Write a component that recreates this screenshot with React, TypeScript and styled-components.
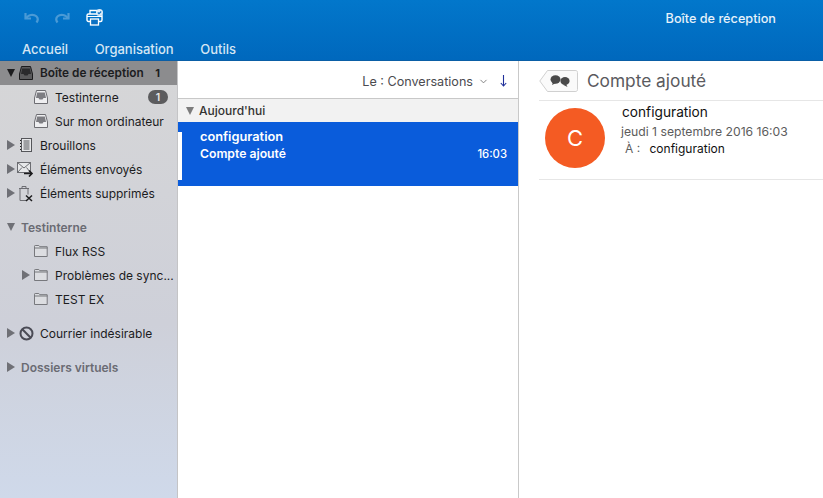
import React from "react";
import styled, { createGlobalStyle } from "styled-components";
import { ChevronDown } from "lucide-react";

const GlobalStyle = createGlobalStyle`
  html, body {
    margin: 0;
    padding: 0;
    height: 100%;
    overflow: hidden;
    background: #fff;
    font-family: "Inter", "Liberation Sans", sans-serif;
  }
  #root { height: 100%; }
`;

const Window = styled.div`
  width: 823px;
  height: 498px;
  display: flex;
  flex-direction: column;
  overflow: hidden;
`;

const Ribbon = styled.header`
  height: 60px;
  flex: none;
  display: flex;
  flex-direction: column;
  background: linear-gradient(#0277cb, #0068bd);
  border-bottom: 1px solid #0a5ea6;
  box-sizing: content-box;
`;

const TopRow = styled.div`
  height: 35px;
  display: flex;
  align-items: center;
  padding-left: 24px;
  gap: 16px;
`;

const WindowTitle = styled.span`
  margin-left: auto;
  margin-right: 47px;
  margin-top: 1px;
  color: #e6f1fa;
  font-size: 12.7px;
  font-weight: 500;
`;

const Tabs = styled.nav`
  display: flex;
  padding: 2px 0 0 22px;
  gap: 26.5px;
  height: 25px;
  box-sizing: border-box;
  align-items: center;
`;

const Tab = styled.span`
  color: #d5e6f4;
  font-size: 13px;
  font-weight: 500;
`;

const Body = styled.div`
  flex: 1;
  display: flex;
  min-height: 0;
`;

const Sidebar = styled.aside`
  width: 177px;
  flex: none;
  border-right: 1px solid #c4c4c6;
  background: linear-gradient(#d6d6d7, #ced0d9 60%, #cfd9ea);
`;

const Row = styled.div<{ $indent: number; $selected?: boolean; $gapBefore?: number }>`
  height: 24px;
  display: flex;
  align-items: center;
  padding-left: ${(p) => p.$indent}px;
  margin-top: ${(p) => p.$gapBefore ?? 0}px;
  font-size: ${(p) => (p.$selected ? 11.8 : 12)}px;
  color: #1c1c1e;
  background: ${(p) => (p.$selected ? "#8c8c8e" : "transparent")};
  font-weight: ${(p) => (p.$selected ? 600 : 400)};
  white-space: nowrap;
`;

const Arrow = styled.span<{ $open?: boolean; $light?: boolean }>`
  width: 0;
  height: 0;
  flex: none;
  margin-right: 2px;
  ${(p) =>
    p.$open
      ? `border-left: 4.5px solid transparent;
         border-right: 4.5px solid transparent;
         border-top: 8px solid ${p.$light ? "#6f7076" : "#1d1d1f"};`
      : `border-top: 5px solid transparent;
         border-bottom: 5px solid transparent;
         border-left: 8px solid #6f7076;`}
`;

const IconSlot = styled.span`
  width: 18px;
  height: 18px;
  flex: none;
  margin-right: 5px;
  display: flex;
  align-items: center;
  justify-content: center;
`;

const Label = styled.span`
  flex: 1;
  min-width: 0;
`;

const SectionLabel = styled.span`
  font-weight: 600;
  color: #6a6b73;
  margin-left: 4px;
`;

const PlainCount = styled.span`
  margin-right: 17px;
  font-size: 11px;
  font-weight: 700;
`;

const Pill = styled.span`
  width: 20px;
  height: 14px;
  border-radius: 7px;
  margin-right: 9px;
  background: #5c5c5e;
  color: #e8e8e8;
  font-size: 10.5px;
  font-weight: 600;
  display: flex;
  align-items: center;
  justify-content: center;
`;

const MessageList = styled.section`
  width: 341px;
  flex: none;
  border-right: 1px solid #c9c9c9;
  box-sizing: border-box;
  display: flex;
  flex-direction: column;
`;

const SortBar = styled.div`
  height: 38px;
  flex: none;
  display: flex;
  align-items: center;
  justify-content: flex-end;
  padding: 3px 11px 0 0;
  box-sizing: border-box;
  border-bottom: 1px solid #c8c8c8;
  color: #4b4b4f;
  font-size: 12.6px;
`;

const SortChevron = styled(ChevronDown)`
  margin-left: 5px;
  color: #777;
`;

const SortArrow = styled.svg`
  margin-left: 11px;
`;

const GroupHeader = styled.div`
  height: 23px;
  flex: none;
  display: flex;
  align-items: center;
  padding-left: 8px;
  background: #f2f2f2;
  font-size: 12px;
  font-weight: 500;
  color: #333;
`;

const GroupArrow = styled.span`
  width: 0;
  height: 0;
  margin-right: 5px;
  border-left: 4.5px solid transparent;
  border-right: 4.5px solid transparent;
  border-top: 8px solid #7c7c7c;
`;

const MessageCard = styled.div`
  height: 64px;
  flex: none;
  background: #0a5cdb;
  color: #fff;
  position: relative;
  padding: 7px 11px 0 22px;
  box-sizing: border-box;
  font-weight: 600;
  line-height: 16.5px;
`;

const UnreadMark = styled.span`
  position: absolute;
  left: 0;
  top: 10px;
  bottom: 6px;
  width: 4px;
  background: #fff;
`;

const CardRow = styled.div<{ $size: number }>`
  display: flex;
  justify-content: space-between;
  align-items: flex-end;
  font-size: ${(p) => p.$size}px;
`;

const CardTime = styled.span`
  font-size: 11.3px;
  font-weight: 500;
`;

const Reader = styled.section`
  flex: 1;
  min-width: 0;
  padding-left: 20px;
`;

const SubjectBar = styled.div`
  height: 39px;
  display: flex;
  align-items: center;
  border-bottom: 1px solid #e6e6e6;
  gap: 9px;
`;

const Subject = styled.h1`
  margin: 0;
  font-size: 17.3px;
  font-weight: 400;
  color: #5a5a5e;
`;

const MailHead = styled.div`
  height: 78px;
  display: flex;
  border-bottom: 1px solid #e6e6e6;
`;

const Avatar = styled.div`
  width: 60px;
  height: 60px;
  border-radius: 50%;
  margin: 7px 0 0 6px;
  background: #f45b23;
  color: #fff;
  font-size: 22px;
  display: flex;
  align-items: center;
  justify-content: center;
`;

const MailMeta = styled.div`
  margin-left: 17px;
  padding-top: 1px;
  display: flex;
  flex-direction: column;
`;

const Sender = styled.span`
  font-size: 13.7px;
  color: #111;
  line-height: 21px;
`;

const MailDate = styled.span`
  font-size: 12.2px;
  color: #5c5c5c;
  line-height: 17px;
  margin-left: -1px;
`;

const Recipient = styled.span`
  font-size: 12px;
  color: #111;
  line-height: 18px;
  padding-left: 3px;
`;

const RecipientKey = styled.span`
  color: #5c5c5c;
  margin-right: 6px;
`;

const InboxIcon = ({ dark }: { dark?: boolean }) => (
  <svg width="14" height="14" viewBox="0 0 14 14">
    <path d="M2.5.5h9l2 7.5v5.5H.5V8z" fill={dark ? "#5a5a5c" : "#eeeef0"} stroke={dark ? "#1b1b1d" : "#6d6d72"} />
    <path d="M3.2 2.5h7.6L12 8H9.5L8.5 9.5h-3L4.5 8H2z" fill={dark ? "#2a2a2c" : "#7d7d82"} />
  </svg>
);

const FolderIcon = () => (
  <svg width="14" height="12" viewBox="0 0 14 12">
    <path d="M.5 2V1.2Q.5.5 1.2.5h3.6l1 1.2h7.4v9.8H.5z" fill="#dcdde1" stroke="#77787d" />
    <path d="M.5 3h13" stroke="#77787d" />
  </svg>
);

const DraftIcon = () => (
  <svg width="12" height="14" viewBox="0 0 12 14">
    <rect x="1.5" y=".5" width="10" height="13" fill="#e7e8ea" stroke="#55565a" />
    <path d="M3.5 3h6M3.5 5h6M3.5 7h6M3.5 9h6M3.5 11h6" stroke="#55565a" />
    <path d="M.5 2v1M.5 5v1M.5 8v1M.5 11v1" stroke="#222" />
  </svg>
);

const SentIcon = () => (
  <svg width="18" height="16" viewBox="0 0 18 16">
    <rect x=".5" y="1.5" width="13" height="10" fill="#e7e8ea" stroke="#6c6d72" />
    <path d="M.5 1.5l6.5 5.5 6.5-5.5M.5 11.5l4.5-5M13.5 11.5l-4-5" fill="none" stroke="#6c6d72" />
    <path d="M7 12.5h8M12 9.5l3 3-3 3" fill="none" stroke="#1c1c1e" strokeWidth="1.6" />
  </svg>
);

const TrashIcon = () => (
  <svg width="16" height="17" viewBox="0 0 16 17">
    <path d="M1 3.5h10M4 3.5V1.5h4v2M2 3.5v12h6" fill="none" stroke="#6c6d72" />
    <path d="M10 3.5v6" stroke="#6c6d72" />
    <path d="M8 10.5l6 5.5M14 10.5l-6 5.5" stroke="#1c1c1e" strokeWidth="1.5" />
  </svg>
);

const BlockIcon = () => (
  <svg width="15" height="15" viewBox="0 0 15 15">
    <circle cx="7.5" cy="7.5" r="6" fill="none" stroke="#4a4b55" strokeWidth="2" />
    <path d="M3.3 3.3l8.4 8.4" stroke="#4a4b55" strokeWidth="2" />
  </svg>
);

const UndoSvg = styled.svg<{ $flip?: boolean }>`
  transform: ${(p) => (p.$flip ? "scaleX(-1)" : "none")};
`;

const UndoIcon = ({ flip }: { flip?: boolean }) => (
  <UndoSvg $flip={flip} width="15" height="12" viewBox="0 0 15 12">
    <path d="M1.5 1v5.5H7" fill="none" stroke="#4a9ad6" strokeWidth="2.2" />
    <path d="M2 6.5C4 2.5 9.5 1.8 12.3 4.3c1.7 1.6 1.7 4.2.2 6.2" fill="none" stroke="#4a9ad6" strokeWidth="2.2" />
  </UndoSvg>
);

const PrintIcon = () => (
  <svg width="18" height="17" viewBox="0 0 18 17">
    <path d="M4 5V1.5h7V5" fill="none" stroke="#fff" strokeWidth="1.3" />
    <rect x="1" y="5" width="15" height="7.5" rx="1.5" fill="none" stroke="#fff" strokeWidth="1.4" />
    <path d="M1 7.5h15" stroke="#fff" />
    <rect x="4.5" y="10" width="8" height="6" fill="#0b72c4" stroke="#fff" strokeWidth="1.3" />
    <circle cx="13.5" cy="3.5" r="3.5" fill="#dcebf7" />
    <path d="M11.8 3.5l1.2 1.2 2.2-2.2" fill="none" stroke="#0b72c4" strokeWidth="1.1" />
  </svg>
);

const ConversationTag = () => (
  <svg width="39" height="22" viewBox="0 0 39 22">
    <path d="M8.5 .5H36a2 2 0 0 1 2.5 2v17a2 2 0 0 1-2.5 2H8.5L.8 11z" fill="#fafafa" stroke="#d0d0d0" />
    <ellipse cx="16.5" cy="9.5" rx="5" ry="4.2" fill="#4a4a4a" />
    <path d="M14 12l-1 3 4-2z" fill="#4a4a4a" />
    <ellipse cx="26" cy="11" rx="4.6" ry="4" fill="#4a4a4a" />
    <path d="M27 14l1.5 3-4-2z" fill="#4a4a4a" />
  </svg>
);

export default function App() {
  return (
    <Window>
      <GlobalStyle />
      <Ribbon>
        <TopRow>
          <UndoIcon />
          <UndoIcon flip />
          <PrintIcon />
          <WindowTitle>Boîte de réception</WindowTitle>
        </TopRow>
        <Tabs>
          <Tab>Accueil</Tab>
          <Tab>Organisation</Tab>
          <Tab>Outils</Tab>
        </Tabs>
      </Ribbon>
      <Body>
        <Sidebar>
          <Row $indent={7} $selected>
            <Arrow $open />
            <IconSlot>
              <InboxIcon dark />
            </IconSlot>
            <Label>Boîte de réception</Label>
            <PlainCount>1</PlainCount>
          </Row>
          <Row $indent={32}>
            <IconSlot>
              <InboxIcon />
            </IconSlot>
            <Label>Testinterne</Label>
            <Pill>1</Pill>
          </Row>
          <Row $indent={32}>
            <IconSlot>
              <InboxIcon />
            </IconSlot>
            <Label>Sur mon ordinateur</Label>
          </Row>
          <Row $indent={7}>
            <Arrow />
            <IconSlot>
              <DraftIcon />
            </IconSlot>
            <Label>Brouillons</Label>
          </Row>
          <Row $indent={7}>
            <Arrow />
            <IconSlot>
              <SentIcon />
            </IconSlot>
            <Label>Éléments envoyés</Label>
          </Row>
          <Row $indent={7}>
            <Arrow />
            <IconSlot>
              <TrashIcon />
            </IconSlot>
            <Label>Éléments supprimés</Label>
          </Row>
          <Row $indent={7} $gapBefore={10}>
            <Arrow $open $light />
            <SectionLabel>Testinterne</SectionLabel>
          </Row>
          <Row $indent={32}>
            <IconSlot>
              <FolderIcon />
            </IconSlot>
            <Label>Flux RSS</Label>
          </Row>
          <Row $indent={22}>
            <Arrow />
            <IconSlot>
              <FolderIcon />
            </IconSlot>
            <Label>Problèmes de sync...</Label>
          </Row>
          <Row $indent={32}>
            <IconSlot>
              <FolderIcon />
            </IconSlot>
            <Label>TEST EX</Label>
          </Row>
          <Row $indent={7} $gapBefore={10}>
            <Arrow />
            <IconSlot>
              <BlockIcon />
            </IconSlot>
            <Label>Courrier indésirable</Label>
          </Row>
          <Row $indent={7} $gapBefore={10}>
            <Arrow />
            <SectionLabel>Dossiers virtuels</SectionLabel>
          </Row>
        </Sidebar>
        <MessageList>
          <SortBar>
            Le : Conversations
            <SortChevron size={11} />
            <SortArrow width="7" height="12" viewBox="0 0 7 12">
              <path d="M3.5 0v11M.8 8l2.7 3 2.7-3" fill="none" stroke="#1f2f9a" strokeWidth="1.1" />
            </SortArrow>
          </SortBar>
          <GroupHeader>
            <GroupArrow />
            Aujourd'hui
          </GroupHeader>
          <MessageCard>
            <UnreadMark />
            <CardRow $size={12.8}>configuration</CardRow>
            <CardRow $size={12.2}>
              Compte ajouté
              <CardTime>16:03</CardTime>
            </CardRow>
          </MessageCard>
        </MessageList>
        <Reader>
          <SubjectBar>
            <ConversationTag />
            <Subject>Compte ajouté</Subject>
          </SubjectBar>
          <MailHead>
            <Avatar>C</Avatar>
            <MailMeta>
              <Sender>configuration</Sender>
              <MailDate>jeudi 1 septembre 2016 16:03</MailDate>
              <Recipient>
                <RecipientKey>À :</RecipientKey> configuration
              </Recipient>
            </MailMeta>
          </MailHead>
        </Reader>
      </Body>
    </Window>
  );
}
